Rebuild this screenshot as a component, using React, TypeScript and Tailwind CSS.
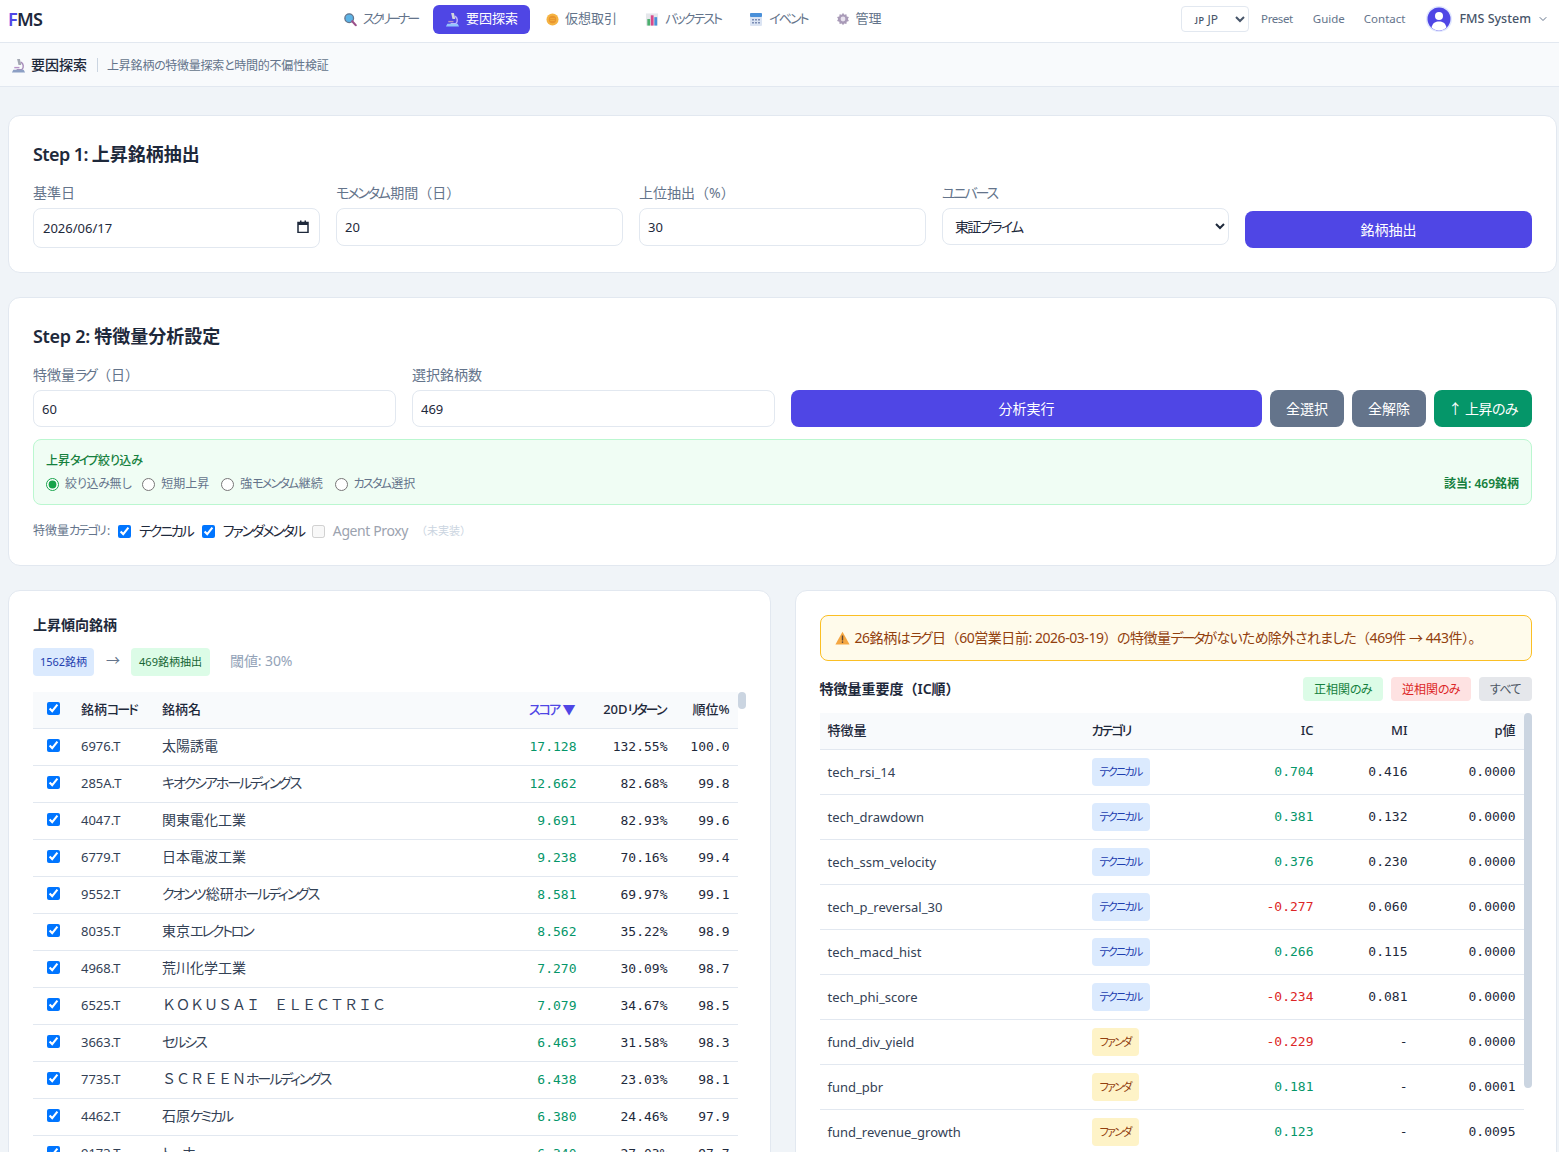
import { ChevronDown } from 'lucide-react';

// Katakana and hiragana runs are set narrower than kanji, as in the source page's Japanese font
const Jp = ({ text }: { text: string }) => (
    <>
        {text.split(/([\u30A0-\u30FF]+|[\u3040-\u309F]+)/).map((part, i, parts) => {
            if (/^[\u30A0-\u30FF]/.test(part)) {
                return parts[i + 1]
                    ? <span key={i} className="mr-[0.1em] [font-feature-settings:'palt'] tracking-[-0.15em]">{part}</span>
                    : <span key={i} className="[font-feature-settings:'palt'] tracking-[-0.15em]">{part}</span>;
            }
            if (/^[\u3040-\u309F]/.test(part)) {
                return <span key={i} className="[font-feature-settings:'palt'] tracking-[-0.05em]">{part}</span>;
            }
            return part;
        })}
    </>
);

const SearchIcon = () => (
    <svg width="13" height="15" viewBox="0 0 15 16">
        <circle cx="6" cy="6.500" r="5" fill="#5cb3e6" stroke="#64748b" strokeWidth="1.500" />
        <path d="M9.500 10l4 4.500" stroke="#9b4f8a" strokeWidth="2.500" strokeLinecap="round" />
    </svg>
);

const MicroscopeIcon = ({ light = false }: { light?: boolean }) => (
    <svg width="15" height="15" viewBox="0 0 16 16">
        <path d="M6.500 1h3l1.500 6.500H8z" fill={light ? "#d1d5db" : "#a3a8b3"} />
        <path d="M10.500 4.500c3 1.500 3.500 5.500 1 8H6" fill="none" stroke={light ? "#c4b5fd" : "#a78bba"} strokeWidth="1.500" />
        <path d="M2.500 12.500h11l1.500 3H1z" fill={light ? "#93c5fd" : "#8c9fc4"} />
        <path d="M3.500 9.500h5.500v1.500H3.500z" fill="#b794c9" />
    </svg>
);

const CoinIcon = () => (
    <svg width="13" height="15" viewBox="0 0 14 15">
        <circle cx="7" cy="7.500" r="6.500" fill="#f5b342" />
        <circle cx="7" cy="7.500" r="4" fill="#e8952e" />
        <path d="M4.500 6.500h5M4.500 8.500h5" stroke="#f5b342" strokeWidth="0.800" />
    </svg>
);

const ChartIcon = () => (
    <svg width="14" height="15" viewBox="0 0 15 15">
        <rect x="1" y="1" width="13" height="13" fill="#e5e7eb" />
        <rect x="2.500" y="7" width="3" height="7" fill="#4caf6e" />
        <rect x="6.200" y="3" width="3" height="11" fill="#d9488b" />
        <rect x="10" y="5" width="3" height="9" fill="#4a90d9" />
    </svg>
);

const CalendarIcon = () => (
    <svg width="14" height="15" viewBox="0 0 14 15">
        <rect x="1" y="1" width="12" height="13" rx="1" fill="#dbe4f3" />
        <rect x="1" y="1" width="12" height="4" rx="1" fill="#4a90d9" />
        <path d="M3 7h2v1.500H3zM6 7h2v1.500H6zM9 7h2v1.500H9zM3 10h2v1.500H3zM6 10h2v1.500H6zM9 10h2v1.500H9z" fill="#7c8db5" />
    </svg>
);

const GearIcon = () => (
    <svg width="14" height="14" viewBox="0 0 14 14">
        <path d="M7 .8l1.200 1.900 2.200-.5.300 2.200 2.200.7-1 2 1 2-2.200.6-.3 2.200-2.200-.5L7 13.200l-1.200-1.800-2.200.5-.3-2.200-2.200-.6 1-2-1-2 2.200-.7.3-2.200 2.200.5z" fill="#a99bb8" />
        <circle cx="7" cy="7" r="2.400" fill="#e8e2ee" />
    </svg>
);

const WarningIcon = () => (
    <svg width="15" height="14" viewBox="0 0 15 14">
        <path d="M7.500.8L14.600 13.400H.4z" fill="#f5a742" />
        <rect x="6.800" y="4.500" width="1.400" height="5" fill="#5b4636" />
        <rect x="6.800" y="10.400" width="1.400" height="1.500" fill="#5b4636" />
    </svg>
);

const AvatarIcon = () => (
    <svg width="26" height="26" viewBox="0 0 26 26">
        <circle cx="13" cy="13" r="13" fill="#e0e7ff" />
        <circle cx="13" cy="13" r="11.500" fill="#4f46e5" />
        <circle cx="13" cy="10" r="4" fill="white" />
        <path d="M5.500 21.500c1-4.500 4-6 7.500-6s6.500 1.500 7.500 6c-2 1.700-4.500 3-7.500 3s-5.500-1.300-7.500-3z" fill="white" />
    </svg>
);

const navItems = [
    { label: <span className="[font-feature-settings:'palt'] tracking-[-0.23em]">スクリーナー</span>, icon: <SearchIcon /> },
    { label: "要因探索", icon: <MicroscopeIcon light />, active: true },
    { label: "仮想取引", icon: <CoinIcon /> },
    { label: <Jp text="バックテスト" />, icon: <ChartIcon /> },
    { label: <Jp text="イベント" />, icon: <CalendarIcon /> },
    { label: "管理", icon: <GearIcon /> },
];

const stocks = [
    ["6976.T", "太陽誘電", "17.128", "132.55%", "100.0"],
    ["285A.T", "キオクシアホールディングス", "12.662", "82.68%", "99.8"],
    ["4047.T", "関東電化工業", "9.691", "82.93%", "99.6"],
    ["6779.T", "日本電波工業", "9.238", "70.16%", "99.4"],
    ["9552.T", "クオンツ総研ホールディングス", "8.581", "69.97%", "99.1"],
    ["8035.T", "東京エレクトロン", "8.562", "35.22%", "98.9"],
    ["4968.T", "荒川化学工業", "7.270", "30.09%", "98.7"],
    ["6525.T", "ＫＯＫＵＳＡＩ　ＥＬＥＣＴＲＩＣ", "7.079", "34.67%", "98.5"],
    ["3663.T", "セルシス", "6.463", "31.58%", "98.3"],
    ["7735.T", "ＳＣＲＥＥＮホールディングス", "6.438", "23.03%", "98.1"],
    ["4462.T", "石原ケミカル", "6.380", "24.46%", "97.9"],
    ["9173.T", "トーホー", "6.340", "27.03%", "97.7"],
];

const features = [
    ["tech_rsi_14", "tech", "0.704", "0.416", "0.0000"],
    ["tech_drawdown", "tech", "0.381", "0.132", "0.0000"],
    ["tech_ssm_velocity", "tech", "0.376", "0.230", "0.0000"],
    ["tech_p_reversal_30", "tech", "-0.277", "0.060", "0.0000"],
    ["tech_macd_hist", "tech", "0.266", "0.115", "0.0000"],
    ["tech_phi_score", "tech", "-0.234", "0.081", "0.0000"],
    ["fund_div_yield", "fund", "-0.229", "-", "0.0000"],
    ["fund_pbr", "fund", "0.181", "-", "0.0001"],
    ["fund_revenue_growth", "fund", "0.123", "-", "0.0095"],
];

const inputClass = "w-full h-[38px] px-2 bg-white border border-[#e2e8f0] rounded-lg text-[13px] text-[#1e293b] outline-none";

const Field = ({ label, children }: { label: string; children: React.ReactNode }) => (
    <div>
        <div className="mb-[5px] text-sm leading-5 text-[#64748b]"><Jp text={label} /></div>
        {children}
    </div>
);

export default function App() {
    return (
        <div className="h-screen overflow-hidden bg-[#f0f4f8] [font-family:'Noto_Sans','Noto_Sans_CJK_JP',sans-serif] text-[#1e293b]">
            <header className="h-[43px] pb-1 bg-white border-b border-[#e2e8f0] flex items-center pl-2 pr-[10px]">
                <div className="w-[324px] shrink-0 text-lg font-semibold tracking-[-0.7px] text-[#1e293b]"><span className="text-[#4f46e5]">F</span>MS</div>
                <nav className="flex items-center gap-1">
                    {navItems.map((item, i) => (
                        <div
                            key={i}
                            className={`flex items-center gap-[6px] h-[29px] px-3 rounded-md text-[13px] ${item.active ? "bg-[#4f46e5] text-white" : "text-[#64748b]"}`}
                        >
                            {item.icon}
                            <span>{item.label}</span>
                        </div>
                    ))}
                </nav>
                <div className="ml-auto flex items-center text-[11.5px] text-[#64748b]">
                    <select className="w-[68px] h-[26px] pl-2 bg-white border border-[#e2e8f0] rounded text-xs text-[#475569] outline-none">
                        <option>ᴊᴘ JP</option>
                    </select>
                    <span className="ml-3 tracking-[-0.4px]">Preset</span>
                    <span className="ml-5">Guide</span>
                    <span className="ml-[19px]">Contact</span>
                    <span className="ml-[21px]"><AvatarIcon /></span>
                    <span className="ml-[7px] text-[12.5px] font-medium text-[#475569]">FMS System</span>
                    <ChevronDown className="ml-[6px]" size={12} />
                </div>
            </header>

            <div className="h-[44px] pt-[1px] bg-[#f8fafc] border-b border-[#e2e8f0] flex items-center pl-[11px]">
                <MicroscopeIcon />
                <span className="ml-[5px] text-sm font-medium">要因探索</span>
                <span className="ml-[10px] mr-[9px] w-px h-[14px] bg-[#cbd5e1]"></span>
                <span className="mt-[2px] text-xs tracking-[-0.2px] text-[#64748b]"><Jp text="上昇銘柄の特徴量探索と時間的不偏性検証" /></span>
            </div>

            <main className="pl-2 pr-[2px] pt-7 flex flex-col gap-6">
                <section className="bg-white border border-[#e2e8f0] rounded-xl p-6">
                    <h2 className="mt-[1px] mb-[15px] text-lg font-semibold leading-[27px]"><span className="tracking-[-0.6px]">Step 1: </span>上昇銘柄抽出</h2>
                    <div className="grid grid-cols-5 gap-4">
                        <Field label="基準日">
                            <div className={`${inputClass} !h-10 !pl-[9px] flex items-center justify-between`}>
                                <span className="translate-y-[1px]">2026/06/17</span>
                                <svg width="12" height="13" viewBox="0 0 12 13" className="mr-[2px] mb-[3px]">
                                    <path d="M1 2.500h10v10H1z" fill="none" stroke="#1e293b" strokeWidth="1.500" />
                                    <path d="M1 2h10v3H1zM3 .5h1.500V3H3zM7.500 .5H9V3H7.500z" fill="#1e293b" />
                                </svg>
                            </div>
                        </Field>
                        <Field label="モメンタム期間（日）">
                            <input type="number" readOnly value="20" className={inputClass} />
                        </Field>
                        <Field label="上位抽出（%）">
                            <input type="number" readOnly value="30" className={inputClass} />
                        </Field>
                        <Field label="ユニバース">
                            <select className="w-full h-[37px] pl-2 bg-white border border-[#e2e8f0] rounded-lg text-sm text-[#1e293b] outline-none [font-feature-settings:'palt'] tracking-[-1.8px]">
                                <option>東証プライム</option>
                            </select>
                        </Field>
                        <button className="self-end h-[37px] rounded-lg bg-[#4f46e5] text-white text-sm">銘柄抽出</button>
                    </div>
                </section>

                <section className="bg-white border border-[#e2e8f0] rounded-xl p-6">
                    <h2 className="mt-[1px] mb-[15px] text-lg font-semibold leading-[27px]"><span className="tracking-[-0.3px]">Step 2: </span>特徴量分析設定</h2>
                    <div className="grid grid-cols-[363px_363px_1fr] gap-4">
                        <Field label="特徴量ラグ（日）">
                            <input type="number" readOnly value="60" className={`${inputClass} !h-[37px]`} />
                        </Field>
                        <Field label="選択銘柄数">
                            <input type="number" readOnly value="469" className={`${inputClass} !h-[37px]`} />
                        </Field>
                        <div className="self-end flex gap-2 h-[37px] text-sm text-white">
                            <button className="flex-1 rounded-lg bg-[#4f46e5]">分析実行</button>
                            <button className="w-[74px] rounded-lg bg-[#64748b]">全選択</button>
                            <button className="w-[74px] rounded-lg bg-[#64748b]">全解除</button>
                            <button className="w-[98px] rounded-lg bg-[#059669] tracking-[-0.5px]"><Jp text="↑ 上昇のみ" /></button>
                        </div>
                    </div>

                    <div className="mt-3 h-[66px] px-3 pt-3 bg-[#f0fdf4] border border-[#bbf7d0] rounded-lg">
                        <div className="text-xs font-medium leading-[18px] text-[#15803d]"><Jp text="上昇タイプ絞り込み" /></div>
                        <div className="mt-[6px] flex items-center text-xs leading-4 text-[#64748b]">
                            <label className="flex items-center gap-[6px]"><input type="radio" name="rise" defaultChecked className="m-0 accent-[#16a34a]" /><span><Jp text="絞り込み無し" /></span></label>
                            <label className="ml-[11px] flex items-center gap-[6px]"><input type="radio" name="rise" className="m-0" />短期上昇</label>
                            <label className="ml-3 flex items-center gap-[6px]"><input type="radio" name="rise" className="m-0" /><span><Jp text="強モメンタム継続" /></span></label>
                            <label className="ml-3 flex items-center gap-[6px]"><input type="radio" name="rise" className="m-0" /><span><Jp text="カスタム選択" /></span></label>
                            <span className="ml-auto font-semibold text-[#15803d]">該当: 469銘柄</span>
                        </div>
                    </div>

                    <div className="mt-4 h-5 flex items-center text-sm">
                        <span className="w-[85px] text-xs text-[#64748b]"><Jp text="特徴量カテゴリ" /><span className="ml-[2px]">:</span></span>
                        <label className="flex items-center gap-2"><input type="checkbox" defaultChecked className="m-0 accent-[#0075ff]" /><span><Jp text="テクニカル" /></span></label>
                        <label className="ml-[9px] flex items-center gap-2"><input type="checkbox" defaultChecked className="m-0 accent-[#0075ff]" /><span><Jp text="ファンダメンタル" /></span></label>
                        <label className="ml-2 flex items-center gap-2 text-[#9ca3af]">
                            <input type="checkbox" disabled className="m-0" /><span className="tracking-[-0.4px]">Agent Proxy</span>
                            <span className="text-[11px] text-[#cbd5e1]">（未実装）</span>
                        </label>
                    </div>
                </section>

                <div className="grid grid-cols-2 gap-6">
                    <section className="bg-white border border-[#e2e8f0] rounded-xl p-6 h-[700px]">
                        <h3 className="text-sm font-semibold leading-5"><Jp text="上昇傾向銘柄" /></h3>
                        <div className="mt-[13px] flex items-center">
                            <span className="h-7 w-[61px] flex items-center justify-center rounded bg-[#dbeafe] text-[11px] text-[#1e40af]">1562銘柄</span>
                            <span className="ml-3 mr-[11px] mb-1 text-sm text-[#64748b]">→</span>
                            <span className="h-7 w-[79px] flex items-center justify-center rounded bg-[#dcfce7] text-[11px] text-[#166534]">469銘柄抽出</span>
                            <span className="ml-5 mb-[2px] text-sm tracking-[-0.1px] text-[#94a3b8]">閾値: 30%</span>
                        </div>
                        <div className="mt-4 flex items-start">
                            <table className="w-[705px] table-fixed border-collapse text-[13px]">
                                <colgroup>
                                    <col className="w-10" />
                                    <col className="w-[81px]" />
                                    <col />
                                    <col className="w-[80px]" />
                                    <col className="w-[91px]" />
                                    <col className="w-[62px]" />
                                </colgroup>
                                <thead>
                                    <tr className="h-[36px] bg-[#f8fafc] border-b border-[#e2e8f0]">
                                        <th className="text-center"><input type="checkbox" defaultChecked className="m-0 mb-[3px] align-middle accent-[#0075ff]" /></th>
                                        <th className="px-2 text-left font-medium"><Jp text="銘柄コード" /></th>
                                        <th className="px-2 text-left font-medium">銘柄名</th>
                                        <th className="pl-2 pr-[9px] text-right font-medium text-[#4f46e5] whitespace-nowrap"><Jp text="スコア" /> ▼</th>
                                        <th className="pl-2 pr-[10px] text-right font-medium whitespace-nowrap">20D<Jp text="リターン" /></th>
                                        <th className="px-2 text-right font-medium">順位%</th>
                                    </tr>
                                </thead>
                                <tbody>
                                    {stocks.map((row) => (
                                        <tr key={row[0]} className="h-[37px] border-b border-[#e2e8f0]">
                                            <td className="text-center"><input type="checkbox" defaultChecked className="m-0 mb-[3px] align-middle accent-[#0075ff]" /></td>
                                            <td className="px-2 text-[#334155]">{row[0]}</td>
                                            <td className="px-2 pb-[2px] whitespace-nowrap text-[14px] text-[#334155]"><Jp text={row[1]} /></td>
                                            <td className="px-2 text-right font-['DejaVu_Sans_Mono',monospace] text-[#059669]">{row[2]}</td>
                                            <td className="px-2 text-right font-['DejaVu_Sans_Mono',monospace]">{row[3]}</td>
                                            <td className="px-2 text-right font-['DejaVu_Sans_Mono',monospace]">{row[4]}</td>
                                        </tr>
                                    ))}
                                </tbody>
                            </table>
                            <div className="w-2 h-[17px] rounded-full bg-[#cbd5e1]"></div>
                        </div>
                    </section>

                    <section className="bg-white border border-[#e2e8f0] rounded-xl p-6 h-[700px]">
                        <div className="h-[46px] px-[14px] flex items-center gap-[5px] bg-[#fffbeb] border border-[#fbbf24] rounded-lg text-sm tracking-[-0.45px] text-[#92400e]">
                            <WarningIcon />
                            <span><Jp text="26銘柄はラグ日（60営業日前: 2026-03-19）の特徴量データがないため除外されました（469件 → 443件）。" /></span>
                        </div>
                        <div className="mt-4 h-6 flex items-center">
                            <h3 className="text-sm font-semibold">特徴量重要度（IC順）</h3>
                            <div className="ml-auto flex gap-2 text-xs">
                                <button className="h-6 w-20 pt-[1px] rounded bg-[#dcfce7] text-[#15803d]"><Jp text="正相関のみ" /></button>
                                <button className="h-6 w-20 pt-[1px] rounded bg-[#fee2e2] text-[#dc2626]"><Jp text="逆相関のみ" /></button>
                                <button className="h-6 w-[53px] pt-[1px] rounded bg-[#e5e7eb] text-[#4b5563]"><Jp text="すべて" /></button>
                            </div>
                        </div>
                        <div className="mt-3 flex items-start">
                            <table className="w-[704px] table-fixed border-collapse text-[13px]">
                                <colgroup>
                                    <col className="w-[264px]" />
                                    <col />
                                    <col className="w-[82px]" />
                                    <col className="w-[94px]" />
                                    <col className="w-[108px]" />
                                </colgroup>
                                <thead>
                                    <tr className="h-[36px] bg-[#f8fafc] border-b border-[#e2e8f0]">
                                        <th className="px-2 text-left font-medium">特徴量</th>
                                        <th className="px-2 text-left font-medium"><Jp text="カテゴリ" /></th>
                                        <th className="px-2 text-right font-medium">IC</th>
                                        <th className="px-2 text-right font-medium">MI</th>
                                        <th className="px-2 text-right font-medium">p値</th>
                                    </tr>
                                </thead>
                                <tbody>
                                    {features.map((row) => (
                                        <tr key={row[0]} className="h-[45px] border-b border-[#e2e8f0]">
                                            <td className="px-2 pt-[2px] text-[#334155]">{row[0]}</td>
                                            <td className="px-2">
                                                {row[1] === "tech" ? (
                                                    <span className="inline-flex items-center h-7 px-2 pt-[2px] rounded bg-[#dbeafe] text-[11px] text-[#1e40af]"><Jp text="テクニカル" /></span>
                                                ) : (
                                                    <span className="inline-flex items-center h-7 px-2 pt-[2px] rounded bg-[#fef3c7] text-[11px] text-[#92400e]"><Jp text="ファンダ" /></span>
                                                )}
                                            </td>
                                            <td className={`px-2 text-right font-['DejaVu_Sans_Mono',monospace] ${row[2].startsWith("-") ? "text-[#dc2626]" : "text-[#059669]"}`}>{row[2]}</td>
                                            <td className="px-2 text-right font-['DejaVu_Sans_Mono',monospace]">{row[3]}</td>
                                            <td className="px-2 text-right font-['DejaVu_Sans_Mono',monospace]">{row[4]}</td>
                                        </tr>
                                    ))}
                                </tbody>
                            </table>
                            <div className="w-2 h-[375px] rounded-full bg-[#cbd5e1]"></div>
                        </div>
                    </section>
                </div>
            </main>
        </div>
    );
}
